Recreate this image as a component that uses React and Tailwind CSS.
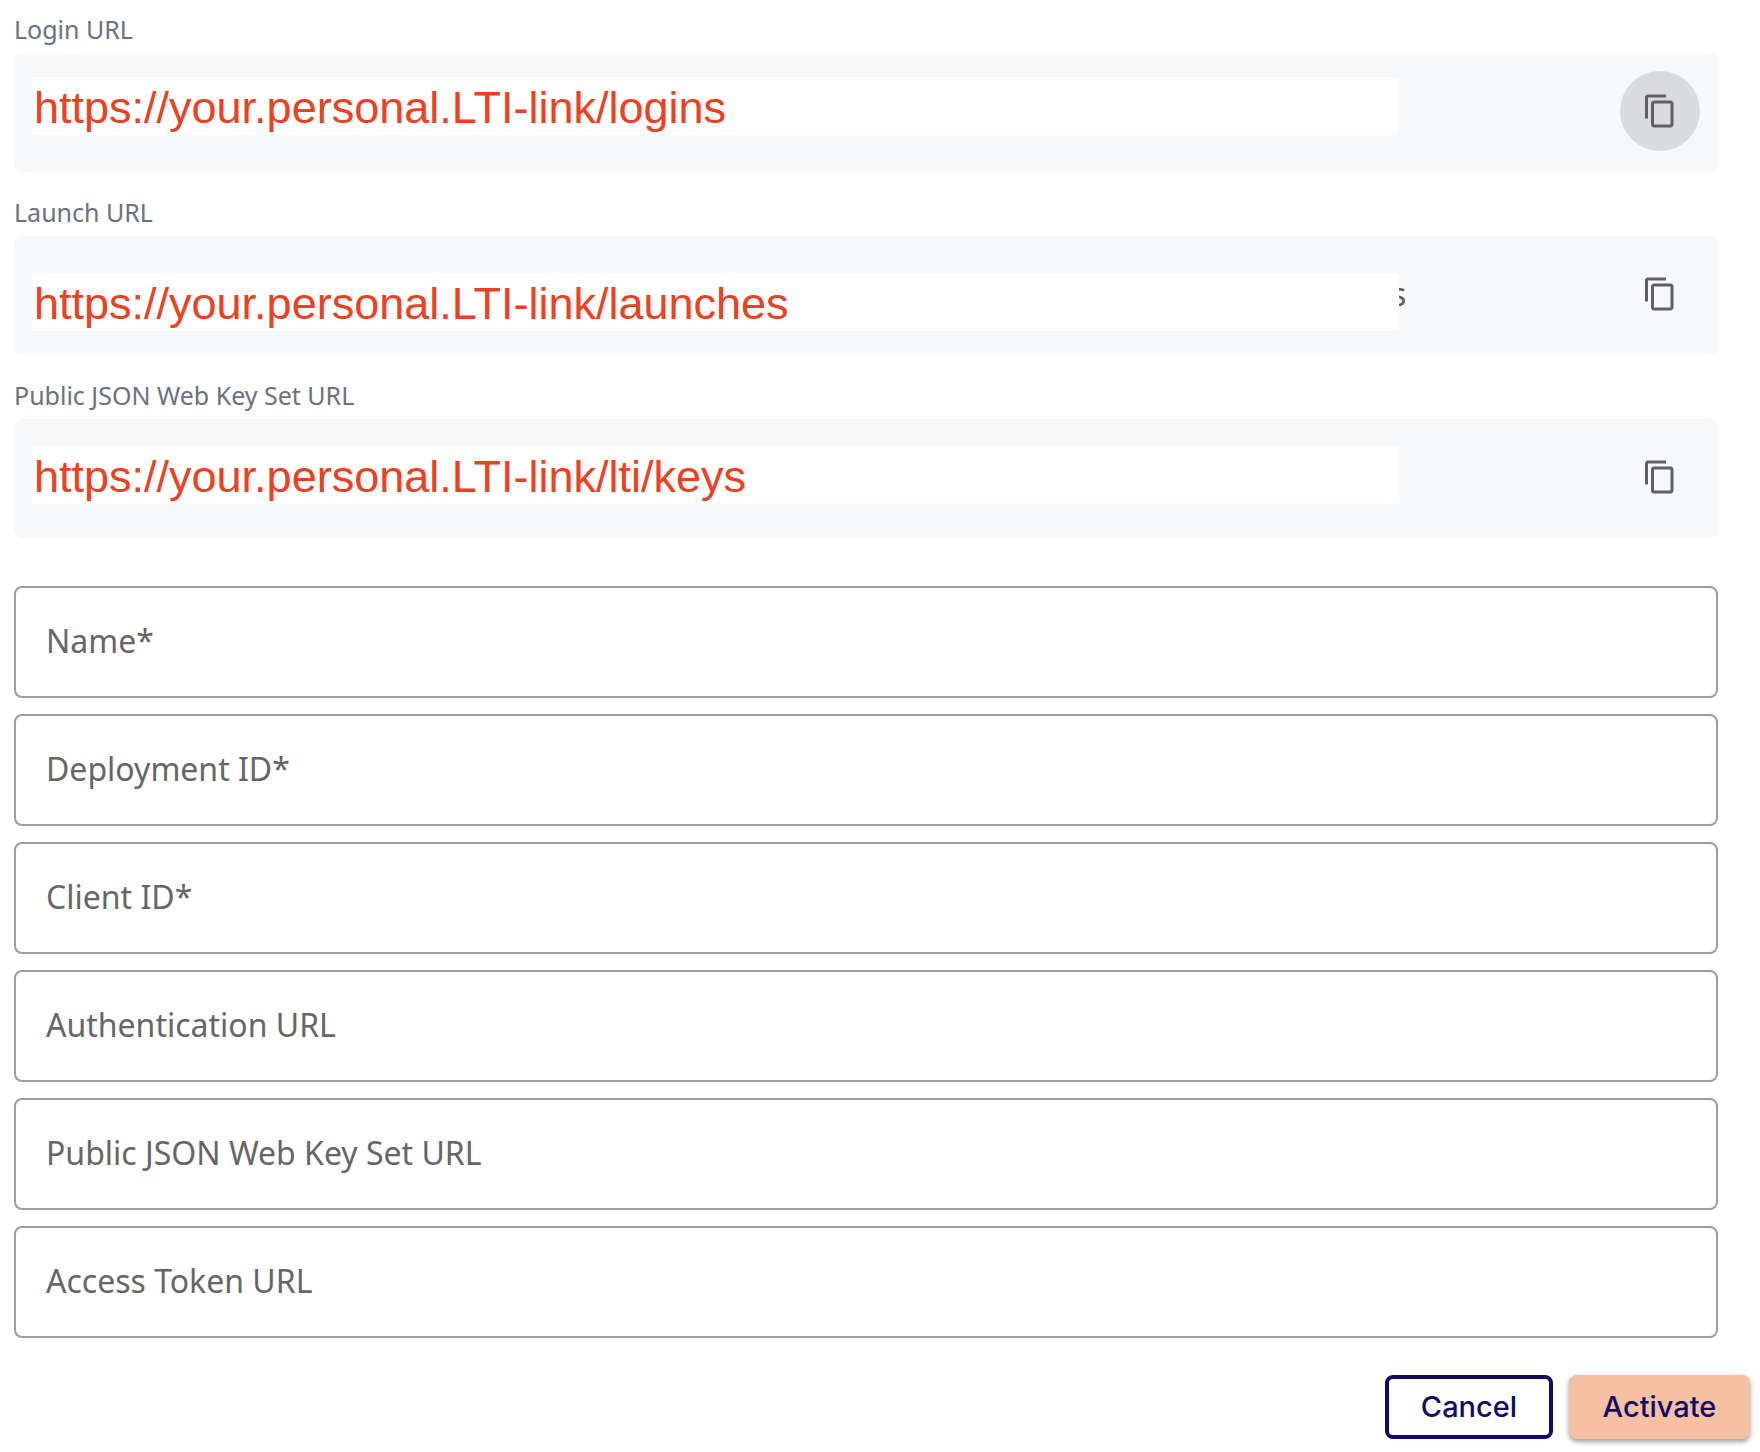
import { MdContentCopy } from "react-icons/md";

const links = [
  { id: "login-url", label: "Login URL", value: "https://your.personal.LTI-link/logins", inset: "mt-6", active: true },
  { id: "launch-url", label: "Launch URL", value: "https://your.personal.LTI-link/launches", inset: "mt-[37px]", tail: "s" },
  { id: "keyset-url", label: "Public JSON Web Key Set URL", value: "https://your.personal.LTI-link/lti/keys", inset: "mt-[27px]" },
];

const fields = [
  { id: "name", label: "Name", required: true },
  { id: "deployment-id", label: "Deployment ID", required: true },
  { id: "client-id", label: "Client ID", required: true },
  { id: "authentication-url", label: "Authentication URL" },
  { id: "public-keyset-url", label: "Public JSON Web Key Set URL" },
  { id: "access-token-url", label: "Access Token URL" },
];

function LinkRow({ id, label, value, inset, active, tail }) {
  return (
    <div className="flex flex-col gap-2">
      <label htmlFor={id} className="text-[25px] leading-8 text-[#6b7280]">
        {label}
      </label>
      <div className="flex h-[119px] items-start rounded-lg bg-[#f7f8fa] px-[18px]">
        <input
          id={id}
          readOnly
          value={value}
          className={`${inset} relative z-10 h-[58px] min-w-0 flex-1 bg-white pt-1 pl-[2px] font-['Liberation_Sans',Arial,sans-serif] text-[45px] text-[#ee4023] outline-none`}
        />
        <div className="flex w-[221px] shrink-0 pt-[38px]">
          {tail && <span className="-ml-2 text-[32px] leading-10 text-[#606060]">{tail}</span>}
        </div>
        <button
          type="button"
          aria-label={`Copy ${label}`}
          className={`mt-[18px] flex size-20 shrink-0 items-center justify-center rounded-full text-[#606062] ${active ? "bg-[#dadbdd]" : ""}`}
        >
          <MdContentCopy className="size-9" />
        </button>
      </div>
    </div>
  );
}

function Field({ id, label, required }) {
  return (
    <div className="flex h-28 items-center rounded-lg border-2 border-[#9e9e9e] px-[30px] pb-[2px]">
      <label htmlFor={id} className="text-[32px] leading-10 text-[#666666]">
        {label}
        {required && <span>*</span>}
      </label>
      <input id={id} required={required} className="h-full min-w-0 flex-1 pl-4 text-[32px] outline-none" />
    </div>
  );
}

export default function App() {
  return (
    <form className="min-h-screen bg-white pt-[13px] pr-[10px] pb-[13px] pl-[14px] font-['Noto_Sans',sans-serif]">
      <div className="mr-8 flex flex-col gap-6">
        {links.map((link) => (
          <LinkRow key={link.id} {...link} />
        ))}
      </div>
      <div className="mt-12 mr-8 flex flex-col gap-4">
        {fields.map((field) => (
          <Field key={field.id} {...field} />
        ))}
      </div>
      <div className="mt-[37px] flex justify-end gap-4 font-['Inter',sans-serif] text-[29px] font-medium text-[#120a64]">
        <button type="button" className="h-16 w-[168px] rounded-lg border-4 border-[#120a64]">
          Cancel
        </button>
        <button
          type="submit"
          className="h-16 w-[181px] rounded-lg bg-[#f6c0a3] shadow-[0_3px_4px_rgba(0,0,0,0.3),0_1px_8px_rgba(0,0,0,0.12)]"
        >
          Activate
        </button>
      </div>
    </form>
  );
}
